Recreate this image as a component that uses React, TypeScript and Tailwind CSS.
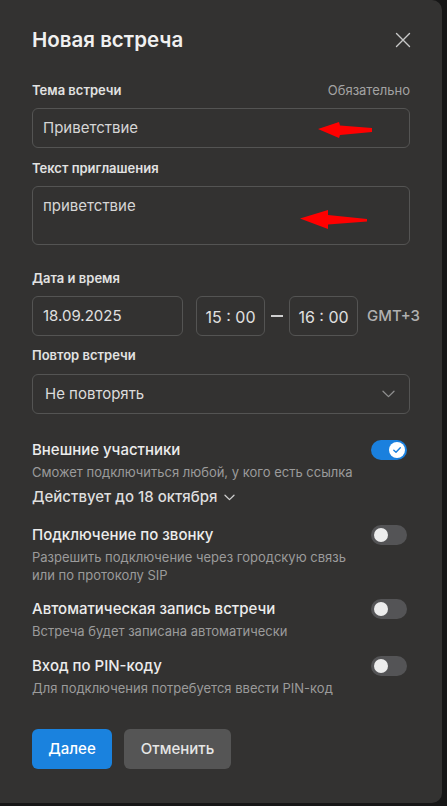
import { FC } from 'react';

const font = { fontFamily: 'Inter, "Noto Sans", sans-serif' };

interface ToggleProps {
	on?: boolean;
}

const Toggle: FC<ToggleProps> = ({ on }) => {
	if (on) {
		return (
			<div className="flex h-5 w-9 shrink-0 items-center justify-end rounded-full bg-[#1a80de] px-[2px]">
				<div className="flex h-4 w-4 items-center justify-center rounded-full bg-white">
					<svg width="10" height="10" viewBox="0 0 10 10" fill="none">
						<path d="M1.8 5.2 4 7.3 8.3 2.8" stroke="#1a80de" strokeWidth="1.4" strokeLinecap="round" strokeLinejoin="round" />
					</svg>
				</div>
			</div>
		);
	}
	return (
		<div className="flex h-5 w-9 shrink-0 items-center justify-start rounded-full bg-[#545456] px-[3px]">
			<div className="h-[14px] w-[14px] rounded-full bg-[#ececec]" />
		</div>
	);
};

interface OptionRowProps {
	title: string;
	on?: boolean;
	children?: React.ReactNode;
	className?: string;
}

const OptionRow: FC<OptionRowProps> = ({ title, on, children, className }) => (
	<div className={className}>
		<div className="flex items-center justify-between pr-[3px]">
			<div className="text-[15px] leading-[22px] font-medium text-[#ececec]">{title}</div>
			<Toggle on={on} />
		</div>
		<div className="mt-[2px] text-[13px] leading-[18px] text-[#9b9b9b]">{children}</div>
	</div>
);

const Label: FC<{ children: React.ReactNode; className?: string }> = ({ children, className }) => (
	<div className={`text-[13px] leading-5 font-semibold text-[#e2e2e2] ${className ?? ''}`}>{children}</div>
);

export default function App() {
	return (
		<div className="min-h-[806px] w-[447px] bg-[#161616]" style={font}>
			<div className="relative h-[803px] w-[442px] rounded-br-[10px] rounded-tr-[10px] bg-[#333231] px-8 pt-[26px]">
				{/* header */}
				<div className="flex items-center justify-between">
					<h1 className="text-[20.5px] leading-7 font-semibold text-[#f0f0f0]">Новая встреча</h1>
					<svg width="16" height="16" viewBox="0 0 16 16" className="mr-[-1px]">
						<path d="M1.5 1.5 14.5 14.5M14.5 1.5 1.5 14.5" stroke="#c8c8c8" strokeWidth="1.4" strokeLinecap="round" />
					</svg>
				</div>

				{/* topic */}
				<div className="mt-[26px] flex items-center justify-between">
					<Label>Тема встречи</Label>
					<span className="text-[13px] leading-5 text-[#a3a3a3]">Обязательно</span>
				</div>
				<div className="mt-2 flex h-10 w-[378px] items-center rounded-md border-[1.5px] border-[#545453] px-[10px] text-[15px] text-[#d6d6d6]">
					Приветствие
				</div>

				{/* invite text */}
				<Label className="mt-[10px]">Текст приглашения</Label>
				<div className="mt-2 h-[59px] w-[378px] rounded-md border-[1.5px] border-[#545453] px-[10px] pt-[9px] text-[15px] leading-5 text-[#d6d6d6]">
					приветствие
				</div>

				{/* date and time */}
				<Label className="mt-[23px]">Дата и время</Label>
				<div className="mt-2 flex w-[400px] items-center">
					<div className="flex h-10 w-[151px] shrink-0 items-center rounded-md border-[1.5px] border-[#545453] px-[10px] text-[15px] text-[#e0e0e0]">
						18.09.2025
					</div>
					<div className="ml-[13px] flex h-10 w-[69px] shrink-0 items-center justify-center rounded-md border-[1.5px] border-[#545453] pt-[2px] text-[16px] text-[#e0e0e0]">
						15 : 00
					</div>
					<div className="mx-[6px] h-[1.5px] w-3 shrink-0 bg-[#cfcfcf]" />
					<div className="flex h-10 w-[69px] shrink-0 items-center justify-center rounded-md border-[1.5px] border-[#545453] pt-[2px] text-[16px] text-[#e0e0e0]">
						16 : 00
					</div>
					<span className="ml-[9px] shrink-0 text-[15px] font-medium text-[#b0b0b0]">GMT+3</span>
				</div>

				{/* repeat */}
				<Label className="mt-[9px]">Повтор встречи</Label>
				<div className="mt-[9px] flex h-10 w-[378px] items-center justify-between rounded-md border-[1.5px] border-[#545453] pl-3 pr-[14px] text-[15px] text-[#dcdcdc]">
					<span>Не повторять</span>
					<svg width="13" height="8" viewBox="0 0 13 8" fill="none">
						<path d="M1 1.2 6.5 6.6 12 1.2" stroke="#8f8f8f" strokeWidth="1.3" strokeLinecap="round" strokeLinejoin="round" />
					</svg>
				</div>

				{/* options */}
				<OptionRow className="mt-[25px]" title="Внешние участники" on>
					Сможет подключиться любой, у кого есть ссылка
				</OptionRow>
				<div className="mt-[5px] flex items-center gap-[7px] text-[15px] leading-[22px] font-medium text-[#dedede]">
					Действует до 18 октября
					<svg width="11" height="7" viewBox="0 0 11 7" fill="none">
						<path d="M1 1.2 5.5 5.6 10 1.2" stroke="#cfcfcf" strokeWidth="1.3" strokeLinecap="round" strokeLinejoin="round" />
					</svg>
				</div>

				<OptionRow className="mt-4" title="Подключение по звонку">
					Разрешить подключение через городскую связь
					<br />
					или по протоколу SIP
				</OptionRow>
				<OptionRow className="mt-[14px]" title="Автоматическая запись встречи">
					Встреча будет записана автоматически
				</OptionRow>
				<OptionRow className="mt-[15px]" title="Вход по PIN-коду">
					Для подключения потребуется ввести PIN-код
				</OptionRow>

				{/* actions */}
				<div className="mt-[32px] flex gap-3">
					<button className="h-10 w-20 rounded-md bg-[#1a82de] text-[15px] font-medium text-white" style={font}>
						Далее
					</button>
					<button className="h-10 w-[107px] rounded-md bg-[#555555] text-[15px] font-medium text-[#e6e6e6]" style={font}>
						Отменить
					</button>
				</div>

				{/* annotation arrows */}
				<svg className="pointer-events-none absolute inset-0" width="442" height="803" viewBox="0 0 442 803">
					<polygon points="318,129 339,122 340,125.5 372,128 372,132 340,135 339,138" fill="#ff0000" />
					<polygon points="300,218.5 328,210 328,215 367,219 367,221.5 328,224.5 328,229" fill="#ff0000" />
				</svg>
			</div>
		</div>
	);
}
